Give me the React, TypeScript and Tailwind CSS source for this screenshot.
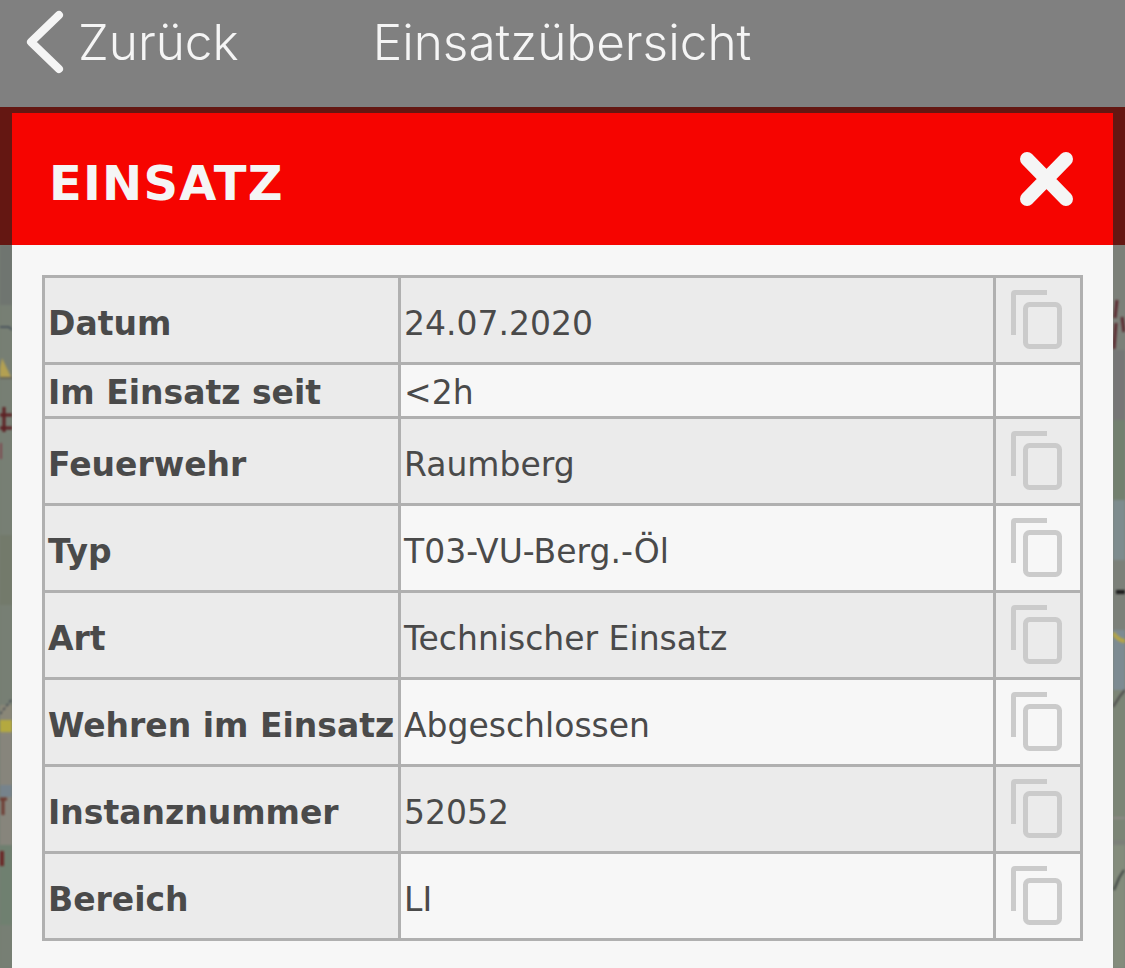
const ROWS = [
  { label: "Datum", value: "24.07.2020", copy: true, h: "h-[87px]", pt: "pt-[8px]" },
  { label: "Im Einsatz seit", value: "<2h", copy: false, h: "h-[54px]", pt: "pt-[4px]" },
  { label: "Feuerwehr", value: "Raumberg", copy: true, h: "h-[87px]", pt: "pt-[8px]" },
  { label: "Typ", value: "T03-VU-Berg.-Öl", copy: true, h: "h-[87px]", pt: "pt-[8px]" },
  { label: "Art", value: "Technischer Einsatz", copy: true, h: "h-[87px]", pt: "pt-[8px]" },
  { label: "Wehren im Einsatz", value: "Abgeschlossen", copy: true, h: "h-[87px]", pt: "pt-[8px]" },
  { label: "Instanznummer", value: "52052", copy: true, h: "h-[87px]", pt: "pt-[8px]" },
  { label: "Bereich", value: "LI", copy: true, h: "h-[87px]", pt: "pt-[8px]" },
];

function CopyIcon() {
  return (
    <svg viewBox="0 0 54 62" className="block h-[62px] w-[54px]" fill="none" stroke="#cbcbcb" strokeWidth="5">
      <path d="M36 2.500H4a1.500 1.500 0 0 0-1.500 1.500V45" />
      <rect x="14.500" y="14.500" width="34" height="42" rx="4" />
    </svg>
  );
}

function LeftMap() {
  return (
    <svg viewBox="0 0 12 723" preserveAspectRatio="none" className="block h-[723px] w-full blur-[1px]">
      <rect width="12" height="723" fill="#777f74" />
      <rect y="0" width="12" height="60" fill="#6f7570" />
      <rect y="290" width="12" height="70" fill="#737a6b" />
      <rect y="460" width="12" height="30" fill="#8a8778" />
      <rect y="490" width="12" height="190" fill="#87857c" />
      <rect y="540" width="12" height="12" fill="#76838c" />
      <rect y="600" width="12" height="80" fill="#6f8070" />
      <path d="M0 82h9l3 3" stroke="#3f4a55" strokeWidth="1.500" fill="none" />
      <path d="M-2 132l4-19 9 19z" fill="#b3a052" />
      <path d="M0 133h12" stroke="#5a4d3a" strokeWidth="1" />
      <path d="M0 170h12M0 183h12M4 162v25" stroke="#5c1f22" strokeWidth="3" fill="none" />
      <path d="M1 198v16" stroke="#7d4a50" strokeWidth="2" />
      <rect y="475" width="12" height="12" fill="#b4a93f" />
      <path d="M0 469l12-15" stroke="#3f4650" strokeWidth="1.500" strokeDasharray="3 2" fill="none" />
      <path d="M0 554h7M3 554v16" stroke="#6d3b32" strokeWidth="3" fill="none" />
      <path d="M2 606v15" stroke="#6a2a28" strokeWidth="4" />
    </svg>
  );
}

function RightMap() {
  return (
    <svg viewBox="0 0 12 723" preserveAspectRatio="none" className="block h-[723px] w-full blur-[1px]">
      <rect width="12" height="723" fill="#7c8079" />
      <rect y="105" width="12" height="70" fill="#767676" />
      <rect y="175" width="12" height="80" fill="#73806f" />
      <rect y="255" width="12" height="60" fill="#7e8c8e" />
      <rect y="385" width="12" height="60" fill="#7d8b92" />
      <rect y="445" width="12" height="150" fill="#7c8576" />
      <rect y="600" width="12" height="123" fill="#848c7c" />
      <path d="M4 55l-2 18M3 78l-2 26M9 72l2 15" stroke="#5b2a30" strokeWidth="3" fill="none" />
      <path d="M3 347h9" stroke="#1c1c1c" strokeWidth="4" fill="none" />
      <path d="M0 388q6 8 12 8" stroke="#b4a548" strokeWidth="4" fill="none" />
      <path d="M0 462l7-11 5-6" stroke="#4b4a4a" strokeWidth="2" fill="none" />
      <path d="M0 573h12" stroke="#8f8a88" strokeWidth="2" fill="none" />
      <path d="M1 645l5-12 5-8" stroke="#3e4442" strokeWidth="2" fill="none" />
    </svg>
  );
}

export default function App() {
  return (
    <div className="flex h-[968px] flex-col overflow-hidden bg-[#f7f7f7] font-['Inter',sans-serif]">
      <header className="flex h-[107px] shrink-0 items-start bg-[#808080] text-[#f5f5f5]">
        <svg viewBox="0 0 40 64" className="ml-[26px] mt-[10px] h-[64px] w-[40px]" fill="none" stroke="#f5f5f5" strokeWidth="8" strokeLinecap="round" strokeLinejoin="round">
          <path d="M33 5 5 32l28 27" />
        </svg>
        <span className="ml-[12px] mt-[12px] text-[49.500px] leading-[60px] font-light">Zurück</span>
        <h1 className="ml-[134px] mt-[12px] text-[49.500px] leading-[60px] font-light">Einsatzübersicht</h1>
      </header>

      <div className="flex flex-1">
        <div className="relative z-10 w-[12px] shrink-0 bg-[#777f74]">
          <div className="relative z-10 h-[138px] bg-[#641712]" />
          <LeftMap />
        </div>

        <main className="relative z-20 flex-1 bg-[#f7f7f7] font-['DejaVu_Sans',sans-serif] text-[#4a4a4a]">
          <div className="h-[6px] bg-[#641712]" />
          <div className="flex h-[132px] items-center justify-between bg-[#f60400] pl-[37px] pr-[39px] text-[#f5f5f5]">
            <h2 className="pt-[8px] text-[48px] leading-none font-bold tracking-[1.200px]">EINSATZ</h2>
            <svg viewBox="0 0 54 54" className="h-[54px] w-[54px]" stroke="#f5f5f5" strokeWidth="14" strokeLinecap="round">
              <path d="M7 7l39 40M46 7 7 47" />
            </svg>
          </div>

          <div className="px-[30px] pt-[30px]">
            <table className="w-[1041px] table-fixed border-collapse border-[3px] border-[#b0b0b0]">
              <colgroup>
                <col className="w-[356px]" />
                <col className="w-[595px]" />
                <col />
              </colgroup>
              <tbody>
                {ROWS.map((row, i) => (
                  <tr key={row.label} className={`${row.h} ${i % 2 === 0 ? "bg-[#ebebeb]" : "bg-[#f7f7f7]"}`}>
                    <th className={`whitespace-nowrap border-[3px] border-[#b0b0b0] bg-[#ebebeb] pl-[3px] text-left text-[33px] leading-[40px] font-bold ${row.pt}`}>
                      {row.label}
                    </th>
                    <td className={`whitespace-nowrap border-[3px] border-[#b0b0b0] pl-[3px] text-[33px] leading-[40px] ${row.pt}`}>{row.value}</td>
                    <td className="border-[3px] border-[#b0b0b0] pt-[1px] pl-[15px]">{row.copy && <CopyIcon />}</td>
                  </tr>
                ))}
              </tbody>
            </table>
          </div>
        </main>

        <div className="relative z-10 w-[12px] shrink-0 bg-[#7c8079]">
          <div className="relative z-10 h-[138px] bg-[#641712]" />
          <RightMap />
        </div>
      </div>
    </div>
  );
}
